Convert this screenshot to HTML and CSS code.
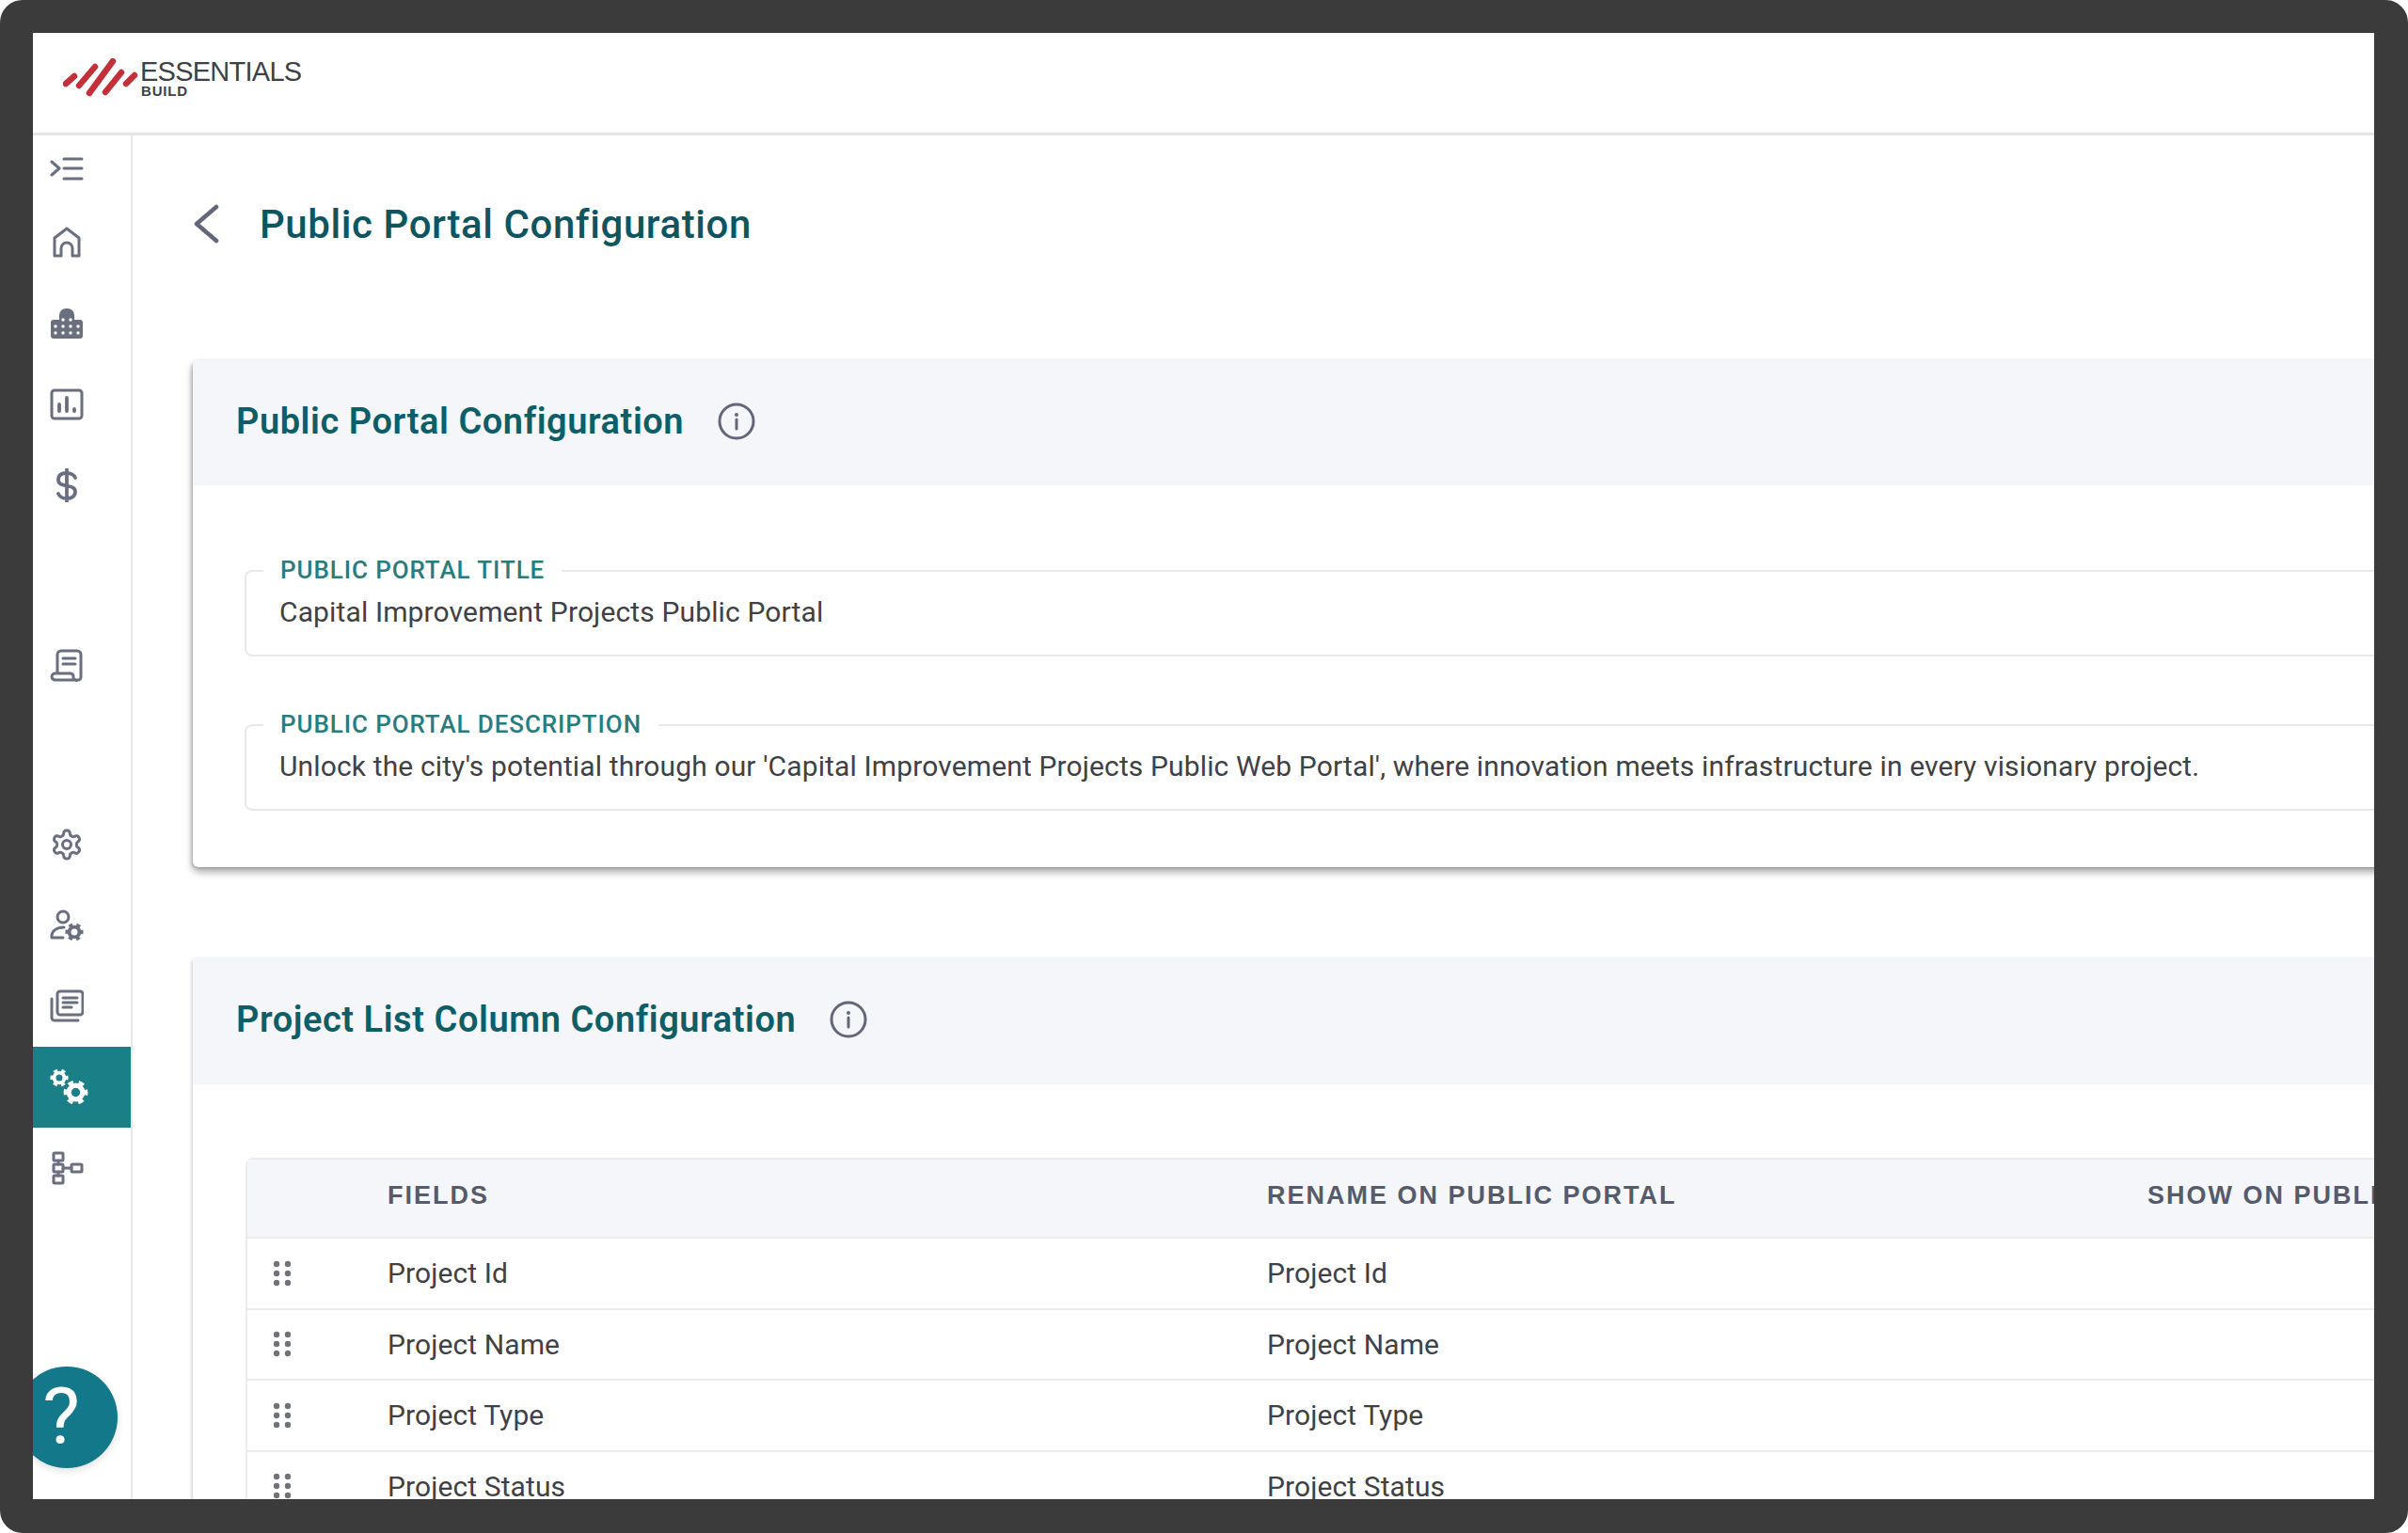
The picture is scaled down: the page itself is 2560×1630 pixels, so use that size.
FILE: index.html
```html
<!DOCTYPE html>
<html lang="en">
  <head>
    <meta charset="UTF-8" />
    <title>Public Portal Configuration</title>
    <link rel="stylesheet" href="styles.css">
  </head>
  <body>
    <svg class="defs" width="0" height="0">
      <symbol id="gear" viewBox="0 0 24 24">
        <path d="M12.22 2h-.44a2 2 0 0 0-2 2v.18a2 2 0 0 1-1 1.73l-.43.25a2 2 0 0 1-2 0l-.15-.08a2 2 0 0 0-2.73.73l-.22.38a2 2 0 0 0 .73 2.73l.15.1a2 2 0 0 1 1 1.72v.51a2 2 0 0 1-1 1.74l-.15.09a2 2 0 0 0-.73 2.73l.22.38a2 2 0 0 0 2.73.73l.15-.08a2 2 0 0 1 2 0l.43.25a2 2 0 0 1 1 1.73V20a2 2 0 0 0 2 2h.44a2 2 0 0 0 2-2v-.18a2 2 0 0 1 1-1.73l.43-.25a2 2 0 0 1 2 0l.15.08a2 2 0 0 0 2.73-.73l.22-.39a2 2 0 0 0-.73-2.73l-.15-.08a2 2 0 0 1-1-1.74v-.5a2 2 0 0 1 1-1.74l.15-.09a2 2 0 0 0 .73-2.73l-.22-.38a2 2 0 0 0-2.73-.73l-.15.08a2 2 0 0 1-2 0l-.43-.25a2 2 0 0 1-1-1.73V4a2 2 0 0 0-2-2z" />
        <circle cx="12" cy="12" r="3" />
      </symbol>
      <symbol id="cog" viewBox="0 0 24 24">
        <circle cx="12" cy="12" r="6.5" stroke-width="4.6" />
        <circle cx="12" cy="12" r="9.5" stroke-width="4" stroke-linecap="butt" stroke-dasharray="5 4.95" transform="rotate(-15 12 12)" />
      </symbol>
      <symbol id="info" viewBox="0 0 40 40">
        <circle cx="20" cy="20" r="18" fill="none" stroke="#62677a" stroke-width="3" />
        <circle cx="20" cy="13" r="2" fill="#62677a" />
        <path d="M20 18v10" fill="none" stroke="#62677a" stroke-width="3" stroke-linecap="round" />
      </symbol>
      <symbol id="grip" viewBox="0 0 18 28">
        <circle cx="3" cy="4" r="3.2" /><circle cx="15" cy="4" r="3.2" />
        <circle cx="3" cy="14" r="3.2" /><circle cx="15" cy="14" r="3.2" />
        <circle cx="3" cy="24" r="3.2" /><circle cx="15" cy="24" r="3.2" />
      </symbol>
    </svg>

    <div class="frame">
      <div class="screen">
        <header class="topbar">
          <div class="logo">
            <svg class="logo-mark" viewBox="0 0 80 42" width="80" height="42">
              <path d="M3 27 12 19M17 29 34 9M28 37 53 3M45 36 62 15M67 27 76 18" />
            </svg>
            <div class="logo-text">
              <div class="logo-name">ESSENTIALS</div>
              <div class="logo-sub">BUILD</div>
            </div>
          </div>
        </header>

        <div class="layout">
          <nav class="sidebar">
            <div class="nav-item nav-toggle">
              <svg class="icon" viewBox="0 0 36 28">
                <path d="M2 6l8 7-8 7M15 3h19M15 13h19M15 24h19" />
              </svg>
            </div>
            <div class="nav-item">
              <svg class="icon" viewBox="0 0 36 36">
                <path d="M5 32V13L18 3l13 10v19h-7v-8a6 6 0 0 0-12 0v8z" />
              </svg>
            </div>
            <div class="nav-item">
              <svg class="icon" viewBox="0 0 36 36">
                <rect class="solid" x="1" y="14" width="34" height="20" rx="3" />
                <rect class="solid" x="10" y="2" width="16" height="22" rx="7" />
                <g class="windows">
                  <circle cx="6" cy="21" r="1.7" /><circle cx="6" cy="28" r="1.7" />
                  <circle cx="14" cy="14" r="1.7" /><circle cx="14" cy="21" r="1.7" /><circle cx="14" cy="28" r="1.7" />
                  <circle cx="22" cy="14" r="1.7" /><circle cx="22" cy="21" r="1.7" /><circle cx="22" cy="28" r="1.7" />
                  <circle cx="30" cy="21" r="1.7" /><circle cx="30" cy="28" r="1.7" />
                </g>
              </svg>
            </div>
            <div class="nav-item">
              <svg class="icon" viewBox="0 0 36 36">
                <rect x="2" y="3" width="32" height="30" rx="3" />
                <path class="thick" d="M10 25v-7M18 25V11M26 25v-2" />
              </svg>
            </div>
            <div class="nav-item">
              <svg class="icon" viewBox="0 0 36 36">
                <path class="thick" d="M27 10c-1-3-5-5-9-5-5 0-9 2-9 7s4 5.500 9 6.500 9 2 9 6.500-4 7-9 7c-4 0-8-2-9-5M18 1v34" />
              </svg>
            </div>
            <div class="nav-item nav-gap-first">
              <svg class="icon" viewBox="0 0 36 36">
                <path d="M8 27V7a4 4 0 0 1 4-4h17a4 4 0 0 1 4 4v24a3 3 0 0 1-3 3H6M6 34a4 4 0 0 1-4-3.500A3.500 3.500 0 0 1 6 27h16a3.500 3.500 0 0 1 3 3.500 3.500 3.500 0 0 0 5 3.500M14 11h13M14 17h13" />
              </svg>
            </div>
            <div class="nav-item nav-gap-second">
              <svg class="icon" viewBox="0 0 24 24"><use href="#gear" class="main-gear" /></svg>
            </div>
            <div class="nav-item">
              <svg class="icon" viewBox="0 0 36 36">
                <circle cx="14" cy="9" r="6" />
                <path d="M2 31v-2c0-5 5-9 13-9M2 31h12" />
                <svg x="16" y="15" width="20" height="20" viewBox="0 0 24 24"><use href="#cog" /></svg>
              </svg>
            </div>
            <div class="nav-item">
              <svg class="icon" viewBox="0 0 36 36">
                <rect x="8" y="2" width="27" height="25" rx="3" />
                <path d="M14 9h15M14 14h15M14 19h9M2 10v20a3 3 0 0 0 3 3h25" />
              </svg>
            </div>
            <div class="nav-item active">
              <svg class="icon icon-gears" viewBox="0 0 42 40">
                <svg x="0" y="0" width="20" height="20" viewBox="0 0 24 24"><use href="#cog" class="white-gear" /></svg>
                <svg x="14" y="12" width="27" height="27" viewBox="0 0 24 24"><use href="#cog" class="white-gear" /></svg>
              </svg>
            </div>
            <div class="nav-item">
              <svg class="icon" viewBox="0 0 36 36">
                <rect x="4" y="2" width="10" height="8" rx="1" />
                <rect x="4" y="14" width="10" height="8" rx="1" />
                <rect x="4" y="26" width="10" height="8" rx="1" />
                <rect x="23" y="14" width="11" height="8" rx="1" />
                <path d="M9 10v4M9 22v4M14 18h9" />
              </svg>
            </div>
          </nav>

          <main class="content">
            <div class="page-title">
              <svg class="back" viewBox="0 0 28 42" width="28" height="42">
                <path d="M25 3 4 21l21 18" />
              </svg>
              <h1>Public Portal Configuration</h1>
            </div>

            <section class="card">
              <div class="card-head">
                <h2>Public Portal Configuration</h2>
                <svg class="info" width="40" height="40"><use href="#info" /></svg>
              </div>
              <div class="card-body">
                <fieldset class="field">
                  <legend>PUBLIC PORTAL TITLE</legend>
                  <div class="field-value">Capital Improvement Projects Public Portal</div>
                </fieldset>
                <fieldset class="field">
                  <legend>PUBLIC PORTAL DESCRIPTION</legend>
                  <div class="field-value">Unlock the city's potential through our 'Capital Improvement Projects Public Web Portal', where innovation meets infrastructure in every visionary project.</div>
                </fieldset>
              </div>
            </section>

            <section class="card card-table">
              <div class="card-head">
                <h2>Project List Column Configuration</h2>
                <svg class="info" width="40" height="40"><use href="#info" /></svg>
              </div>
              <div class="table-wrap">
                <div class="table">
                  <div class="row row-head">
                    <div></div>
                    <div>FIELDS</div>
                    <div>RENAME ON PUBLIC PORTAL</div>
                    <div>SHOW ON PUBLIC PORTAL</div>
                  </div>
                  <div class="row">
                    <svg class="grip" width="18" height="28"><use href="#grip" /></svg>
                    <div>Project Id</div>
                    <div>Project Id</div>
                    <div></div>
                  </div>
                  <div class="row">
                    <svg class="grip" width="18" height="28"><use href="#grip" /></svg>
                    <div>Project Name</div>
                    <div>Project Name</div>
                    <div></div>
                  </div>
                  <div class="row">
                    <svg class="grip" width="18" height="28"><use href="#grip" /></svg>
                    <div>Project Type</div>
                    <div>Project Type</div>
                    <div></div>
                  </div>
                  <div class="row">
                    <svg class="grip" width="18" height="28"><use href="#grip" /></svg>
                    <div>Project Status</div>
                    <div>Project Status</div>
                    <div></div>
                  </div>
                </div>
              </div>
            </section>
          </main>
        </div>

        <div class="help">?</div>
      </div>
    </div>
  </body>
</html>
```

FILE: styles.css
```css
* {
  box-sizing: border-box;
}

body {
  margin: 0;
  background: #fff;
  font-family: Roboto, "Liberation Sans", sans-serif;
}

.defs {
  position: absolute;
}

.frame {
  width: 2560px;
  height: 1630px;
  padding: 35px 36px 36px 35px;
  background: #3b3b3b;
  border-radius: 24px;
}

.screen {
  position: relative;
  display: flex;
  flex-direction: column;
  height: 100%;
  background: #fff;
  overflow: hidden;
}

.topbar {
  flex: none;
  display: flex;
  align-items: center;
  height: 109px;
  padding: 0 0 10px 32px;
  border-bottom: 3px solid #e5e5e5;
}

.logo {
  display: flex;
  align-items: flex-start;
  gap: 3px;
}

.logo-mark path {
  fill: none;
  stroke: #c4303a;
  stroke-width: 6.5;
  stroke-linecap: round;
}

.logo-text {
  font-family: "Liberation Sans", sans-serif;
  color: #3d4047;
}

.logo-name {
  margin-left: -1px;
  font-size: 29px;
  line-height: 28px;
  letter-spacing: -0.75px;
}

.logo-sub {
  margin-top: -1px;
  font-size: 15px;
  line-height: 15px;
  font-weight: bold;
  letter-spacing: 0.8px;
}

.layout {
  flex: 1;
  display: flex;
  min-height: 0;
}

.sidebar {
  flex: none;
  width: 106px;
  border-right: 2px solid #e8e8e8;
}

.nav-item {
  display: flex;
  align-items: center;
  padding-left: 18px;
  height: 86px;
}

.nav-toggle {
  height: 71px;
}

.nav-gap-first {
  margin-top: 105px;
}

.nav-gap-second {
  margin-top: 105px;
}

.icon {
  width: 36px;
  height: 36px;
  fill: none;
  stroke: #6a6f80;
  stroke-width: 3;
  stroke-linecap: round;
  stroke-linejoin: round;
}

.nav-toggle .icon {
  height: 28px;
}

.icon .thick {
  stroke-width: 3.8;
}

.icon .solid {
  fill: #6a6f80;
  stroke: none;
}

.icon .windows {
  fill: #fff;
  stroke: none;
}

.icon .main-gear {
  stroke-width: 2;
}

.active {
  background: #1a7f86;
}

.icon-gears {
  width: 42px;
  height: 40px;
}

.icon .white-gear {
  stroke: #fff;
}

.content {
  flex: 1;
  min-width: 0;
  padding: 54px 0 0 64px;
  overflow: hidden;
}

.page-title {
  display: flex;
  align-items: center;
  gap: 43px;
  height: 80px;
  margin-bottom: 105px;
}

.back {
  flex: none;
}

.back path {
  fill: none;
  stroke: #62677a;
  stroke-width: 4.5;
  stroke-linecap: round;
  stroke-linejoin: round;
}

h1 {
  margin: 0;
  font-size: 42px;
  font-weight: 500;
  letter-spacing: 0.57px;
  color: #0e5560;
}

.card {
  width: 2600px;
  background: #fff;
  border-radius: 6px;
  box-shadow: -2px 1px 3px rgba(0, 0, 0, 0.14), 0 5px 8px rgba(0, 0, 0, 0.36);
}

.card-table {
  margin-top: 96px;
  box-shadow: -2px 1px 3px rgba(0, 0, 0, 0.14);
}

.card-head {
  display: flex;
  align-items: center;
  gap: 36px;
  height: 133px;
  padding: 0 0 3px 46px;
  background: #f4f6f9;
}

.card-table .card-head {
  height: 135px;
}

h2 {
  margin: 0;
  font-size: 38px;
  font-weight: 600;
  letter-spacing: 0.55px;
  color: #0d5e66;
}

.card-body {
  padding: 75px 0 60px 55px;
}

.field {
  margin: 0;
  padding: 13px 0 30px 35px;
  border: 2px solid #e9e9e9;
  border-right: none;
  border-radius: 8px 0 0 8px;
}

.field + .field {
  margin-top: 57px;
}

legend {
  margin-left: -17px;
  padding: 0 18px 2px;
  font-size: 26px;
  line-height: 30px;
  font-weight: 500;
  letter-spacing: 0.9px;
  color: #2a7c7c;
}

.field-value {
  font-size: 30px;
  line-height: 30px;
  letter-spacing: 0.13px;
  color: #3f4144;
}

.table-wrap {
  padding: 78px 0 0 56px;
}

.table {
  border-top: 2px solid #ececec;
  border-left: 2px solid #ececec;
  border-radius: 8px 0 0 0;
}

.row {
  display: grid;
  grid-template-columns: 149px 935px 936px 1fr;
  align-items: center;
  height: 75.5px;
  border-bottom: 2px solid #ececec;
  font-size: 30px;
  letter-spacing: 0.1px;
  color: #3f4144;
}

.row-head {
  height: 84px;
  padding-bottom: 6px;
  background: #f4f6f9;
  font-family: "Liberation Sans", sans-serif;
  font-size: 27px;
  font-weight: bold;
  letter-spacing: 2px;
  color: #565b6b;
  white-space: nowrap;
}

.grip {
  margin-left: 28px;
  fill: #6f7278;
}

.help {
  position: absolute;
  left: -18px;
  top: 1418px;
  width: 108px;
  height: 108px;
  padding-right: 12px;
  border-radius: 50%;
  background: #13798a;
  color: #fff;
  font-size: 84px;
  line-height: 108px;
  text-align: center;
  box-shadow: 0 3px 8px rgba(0, 0, 0, 0.12);
}
```
